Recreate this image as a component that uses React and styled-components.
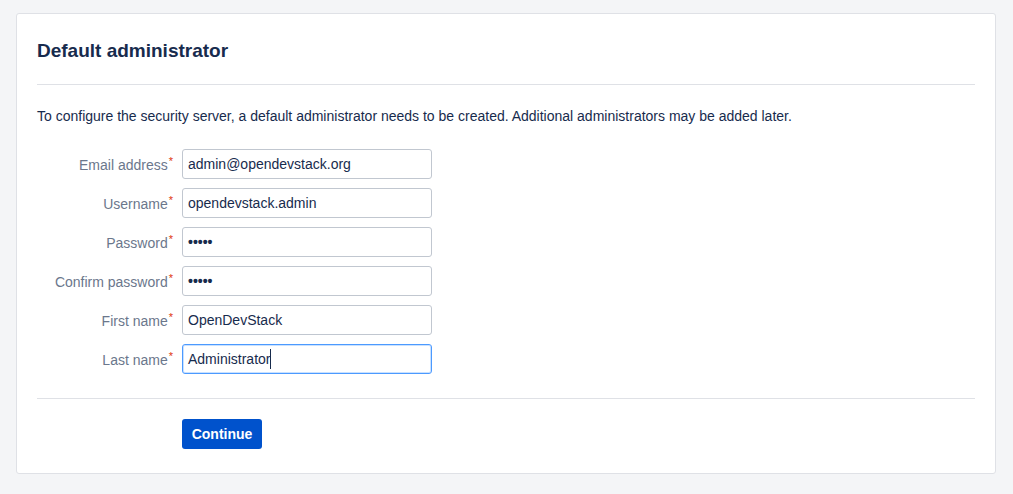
import React from "react";
import styled, { createGlobalStyle } from "styled-components";

const Global = createGlobalStyle`
  html, body { margin: 0; padding: 0; background: #f4f5f7; }
  body { font-family: "Liberation Sans", Arial, sans-serif; color: #172b4d; }
  * { box-sizing: border-box; }
`;

const Page = styled.div`
  padding: 13px 17px 20px 16px;
`;

const Card = styled.div`
  background: #fff;
  border: 1px solid #dfe1e6;
  border-radius: 3px;
  height: 461px;
  padding: 0 20px;
  display: flex;
  flex-direction: column;
`;

const Heading = styled.h2`
  margin: 0;
  padding-top: 25px;
  height: 71px;
  font-size: 19px;
  font-weight: 600;
  line-height: 24px;
  color: #172b4d;
  border-bottom: 1px solid #dfe1e6;
`;

const Intro = styled.p`
  margin: 0;
  padding-top: 21px;
  font-size: 14px;
  line-height: 20px;
  color: #172b4d;
`;

const Form = styled.div`
  margin-top: 23px;
  display: flex;
  flex-direction: column;
  gap: 9px;
`;

const Row = styled.div`
  display: flex;
  align-items: center;
  gap: 9px;
`;

const Label = styled.label`
  width: 136px;
  text-align: right;
  font-size: 14px;
  color: #6b778c;
  white-space: nowrap;
`;

const Req = styled.span`
  color: #de350b;
  font-size: 11px;
  vertical-align: 5px;
  margin-left: 1px;
`;

const Input = styled.div`
  width: 250px;
  height: 30px;
  border: 1px solid ${(p) => (p.$focused ? "#4c9aff" : "#c1c7d0")};
  ${(p) => p.$focused && "box-shadow: inset 0 0 0 1px rgba(76, 154, 255, 0.3);"}
  border-radius: 3px;
  padding: 0 5px;
  display: flex;
  align-items: center;
  font-size: 14px;
  color: #172b4d;
`;

const Dots = styled.span`
  font-size: 14px;
  font-weight: bold;
`;

const Caret = styled.span`
  display: inline-block;
  width: 1px;
  height: 20px;
  background: #172b4d;
`;

const Footer = styled.div`
  margin-top: 24px;
  border-top: 1px solid #dfe1e6;
  padding-top: 20px;
  padding-left: 145px;
`;

const Button = styled.button`
  width: 80px;
  height: 30px;
  background: #0052cc;
  color: #fff;
  border: none;
  border-radius: 3px;
  font-family: inherit;
  font-size: 14px;
  font-weight: bold;
  padding: 0;
`;

const fields = [
  { label: "Email address", value: "admin@opendevstack.org" },
  { label: "Username", value: "opendevstack.admin" },
  { label: "Password", password: true },
  { label: "Confirm password", password: true },
  { label: "First name", value: "OpenDevStack" },
  { label: "Last name", value: "Administrator", focused: true },
];

export default function App() {
  return (
    <>
      <Global />
      <Page>
        <Card>
          <Heading>Default administrator</Heading>
          <Intro>
            To configure the security server, a default administrator needs to be created.
            Additional administrators may be added later.
          </Intro>
          <Form>
            {fields.map((f) => (
              <Row key={f.label}>
                <Label>
                  {f.label}
                  <Req>*</Req>
                </Label>
                <Input $focused={f.focused}>
                  {f.password ? <Dots>•••••</Dots> : f.value}
                  {f.focused && <Caret />}
                </Input>
              </Row>
            ))}
          </Form>
          <Footer>
            <Button>Continue</Button>
          </Footer>
        </Card>
      </Page>
    </>
  );
}
